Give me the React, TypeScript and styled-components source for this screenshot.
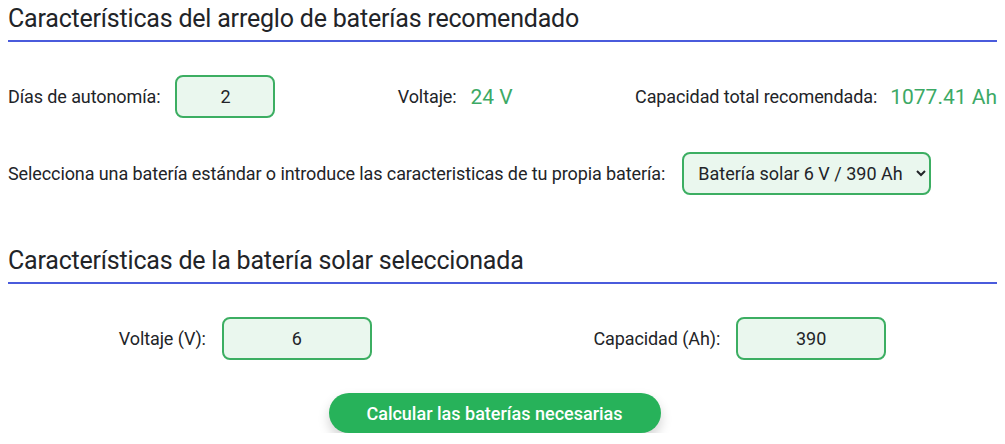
import styled, { createGlobalStyle } from 'styled-components';

const GlobalStyle = createGlobalStyle`
    body {
        margin: 0;
        background: #ffffff;
        font-family: Roboto, "Liberation Sans", sans-serif;
        color: #222428;
    }
`;

// Page Styling Component
const Page = styled.div`
    padding: 0 8px;
    width: 1005px;
    box-sizing: border-box;
`;

// Section Title Styling Component
const Title = styled.h2<{ $top: number }>`
    margin: ${(p) => p.$top}px 0 0;
    padding-bottom: 5px;
    font-size: 25px;
    font-weight: 400;
    line-height: 33px;
    letter-spacing: -0.2px;
    border-bottom: 2px solid #4a5bdc;
`;

// Row Styling Component
const Row = styled.div<{ $justify: string; $top: number }>`
    display: flex;
    align-items: center;
    justify-content: ${(p) => p.$justify};
    margin-top: ${(p) => p.$top}px;
`;

// Field Styling Component
const Field = styled.div<{ $gap: number }>`
    display: flex;
    align-items: center;
    gap: ${(p) => p.$gap}px;
`;

const Label = styled.span`
    font-size: 18px;
    letter-spacing: -0.1px;
`;

const Value = styled.span`
    font-size: 21px;
    color: #3ca965;
`;

const Input = styled.input<{ $width: number }>`
    width: ${(p) => p.$width}px;
    height: 43px;
    box-sizing: border-box;
    border: 2px solid #3cae62;
    border-radius: 8px;
    background: #eaf7ee;
    font-family: Roboto, "Liberation Sans", sans-serif;
    font-size: 18px;
    color: #222428;
    text-align: center;
    outline: none;
`;

const Select = styled.select`
    width: 249px;
    height: 43px;
    box-sizing: border-box;
    border: 2px solid #3cae62;
    border-radius: 8px;
    background: #eaf7ee;
    font-family: Roboto, "Liberation Sans", sans-serif;
    font-size: 18px;
    color: #222428;
    padding: 0 8px 0 10px;
    outline: none;
`;

const ButtonRow = styled.div`
    display: flex;
    justify-content: center;
    margin-top: 33px;
    padding-right: 16px;
`;

const Button = styled.button`
    width: 332px;
    height: 40px;
    border: none;
    border-radius: 20px;
    background: #27b25a;
    color: #ffffff;
    font-family: Roboto, "Liberation Sans", sans-serif;
    font-size: 18px;
    font-weight: 500;
    box-shadow: 0 6px 12px rgba(0, 0, 0, 0.18);
    cursor: pointer;
`;

const App = () => {
    return (
        <>
            <GlobalStyle />
            <Page>
                {/* Arreglo recomendado */}
                <Title $top={2}>Características del arreglo de baterías recomendado</Title>
                <Row $justify='space-between' $top={33}>
                    <Field $gap={15}>
                        <Label>Días de autonomía:</Label>
                        <Input $width={100} defaultValue='2' />
                    </Field>
                    <Field $gap={14}>
                        <Label>Voltaje:</Label>
                        <Value>24 V</Value>
                    </Field>
                    <Field $gap={13}>
                        <Label>Capacidad total recomendada:</Label>
                        <Value>1077.41 Ah</Value>
                    </Field>
                </Row>
                <Row $justify='flex-start' $top={34}>
                    <Field $gap={17}>
                        <Label>Selecciona una batería estándar o introduce las caracteristicas de tu propia batería:</Label>
                        <Select defaultValue='6-390'>
                            <option value='6-390'>Batería solar 6 V / 390 Ah</option>
                        </Select>
                    </Field>
                </Row>

                {/* Batería seleccionada */}
                <Title $top={49}>Características de la batería solar seleccionada</Title>
                <Row $justify='space-around' $top={33}>
                    <Field $gap={16}>
                        <Label>Voltaje (V):</Label>
                        <Input $width={150} defaultValue='6' />
                    </Field>
                    <Field $gap={16}>
                        <Label>Capacidad (Ah):</Label>
                        <Input $width={150} defaultValue='390' />
                    </Field>
                </Row>
                <ButtonRow>
                    <Button>Calcular las baterías necesarias</Button>
                </ButtonRow>
            </Page>
        </>
    );
};

export default App;
